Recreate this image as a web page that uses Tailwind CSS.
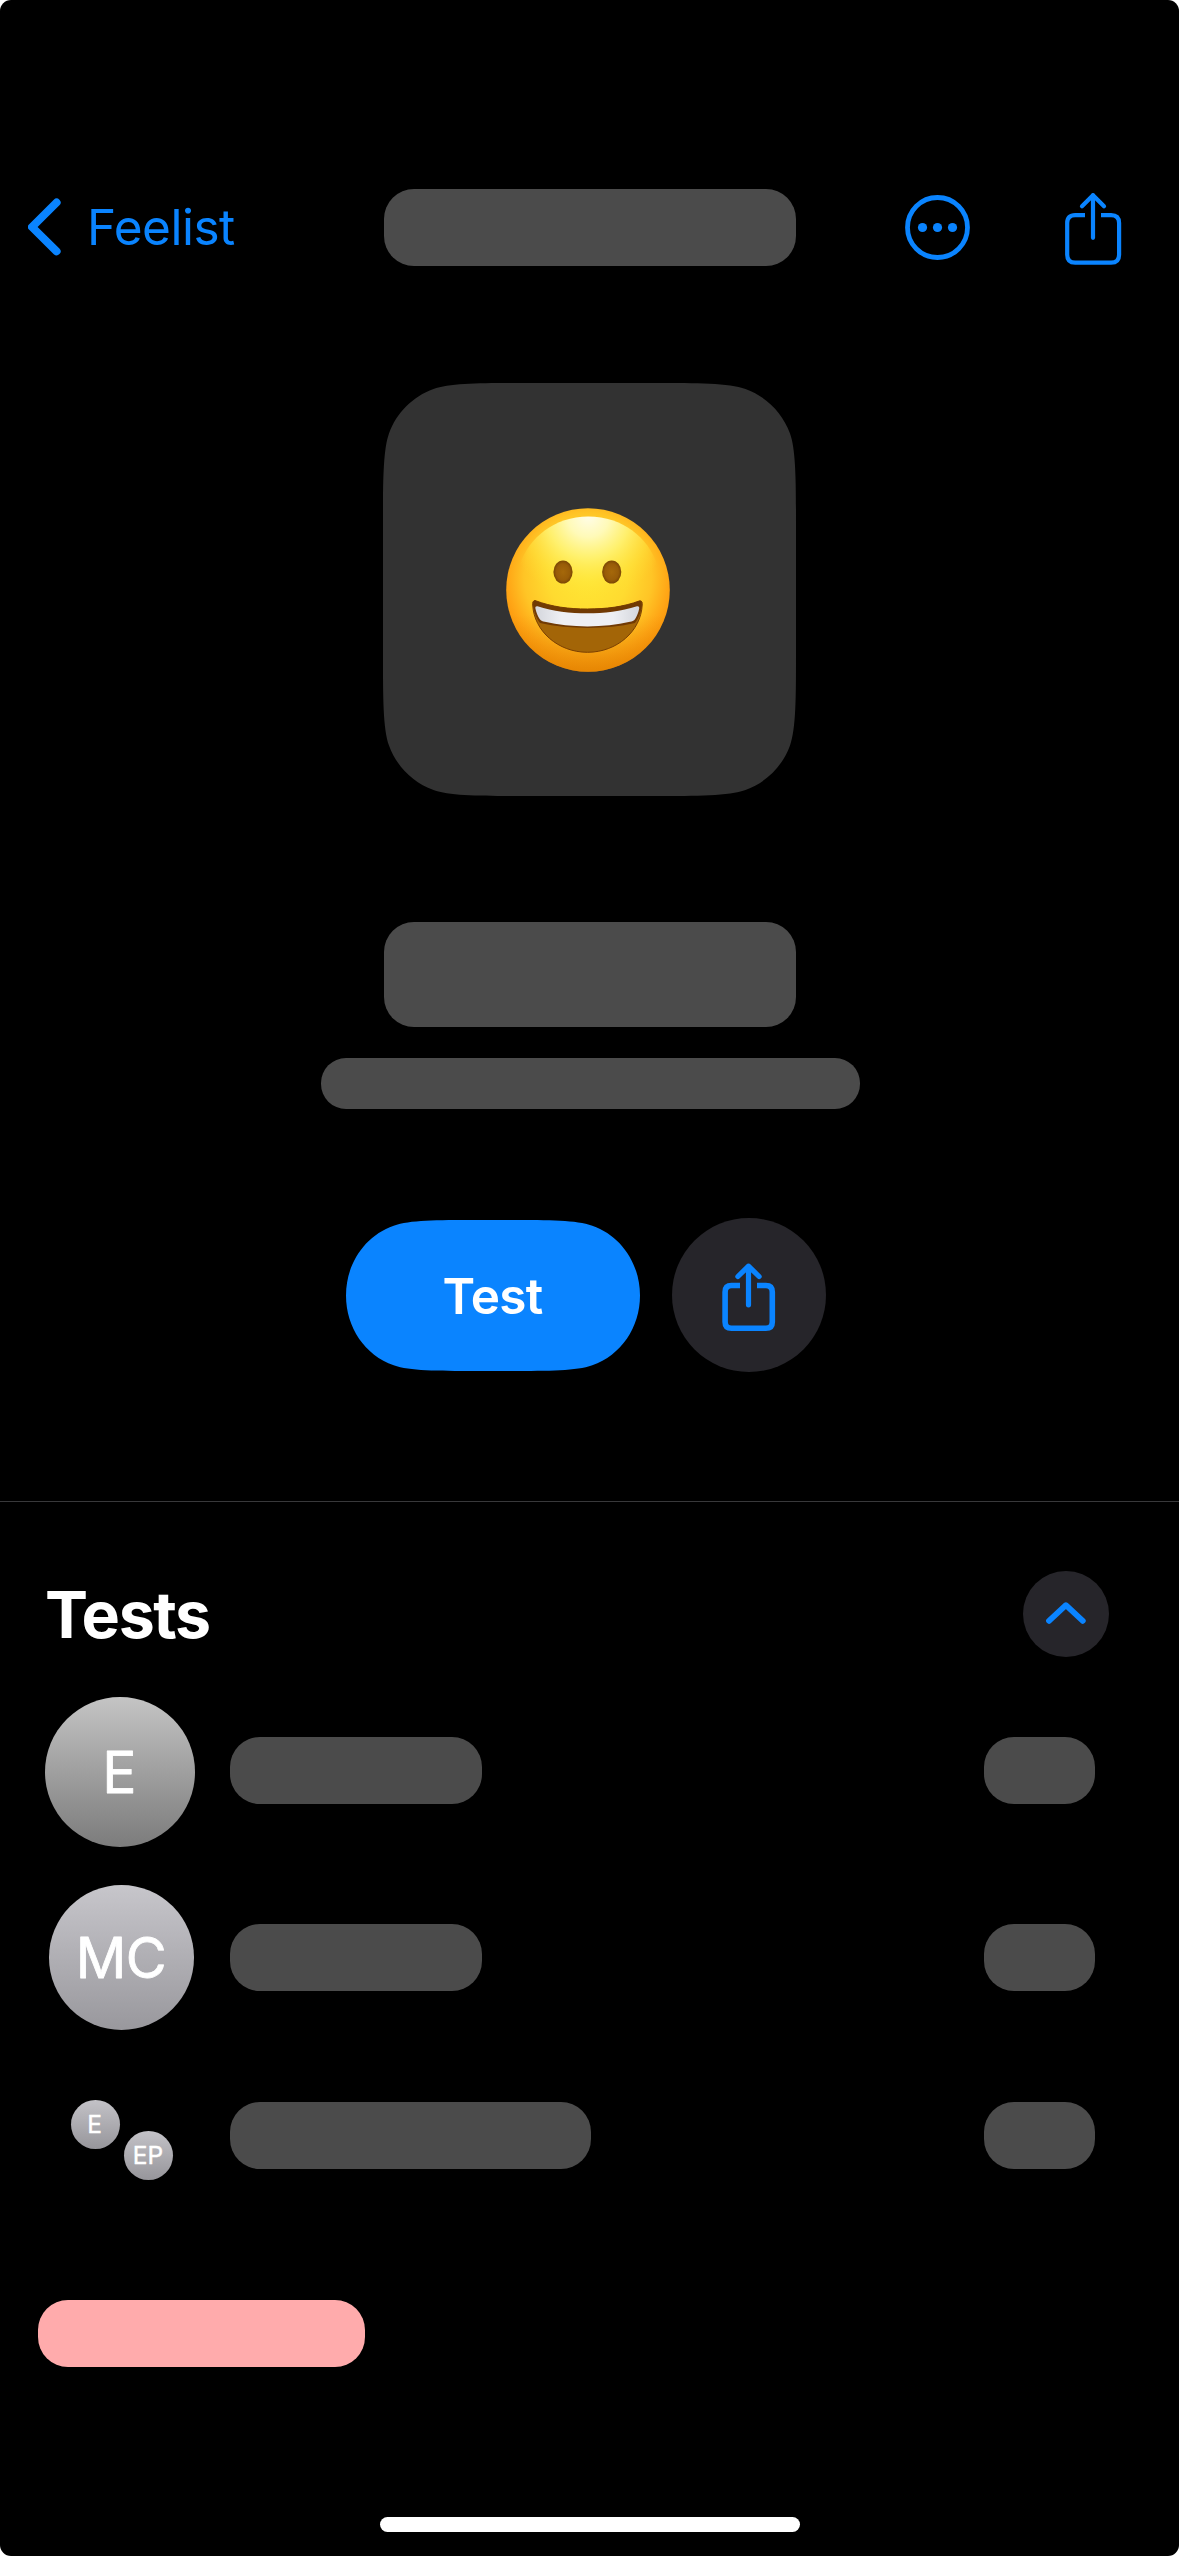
<!DOCTYPE html>
<html lang="en">
<head>
<meta charset="utf-8">
<title>Feelist</title>
<script src="https://cdn.jsdelivr.net/npm/@tailwindcss/browser@4"></script>
</head>
<body class="bg-white">
<div class="flex h-[2556px] w-[1179px] flex-col overflow-hidden rounded-[11px] bg-black font-['Inter',sans-serif]">

  <!-- Navigation bar -->
  <header class="mt-[189px] flex h-[77px] items-center">
    <a class="flex w-[384px] items-center text-[#0a84ff]">
      <svg class="mb-[2px] ml-[28px] block" width="34" height="58" viewBox="0 0 34 58" fill="none" stroke="currentColor" stroke-width="8" stroke-linecap="round" stroke-linejoin="round"><path d="M28.600 4.500 L4 29 L28.600 53.300"/></svg>
      <span class="mb-[2px] ml-[25px] text-[49.500px] leading-[60px] tracking-[-0.5px]">Feelist</span>
    </a>
    <div class="h-[77px] w-[412px] rounded-[30px] bg-[#4b4b4b]"></div>
    <svg class="ml-[108px] block text-[#0a84ff]" width="67" height="67" viewBox="0 0 67 67"><circle cx="33.5" cy="33.5" r="30" fill="none" stroke="currentColor" stroke-width="4.8"/><g fill="currentColor"><circle cx="18.5" cy="33.5" r="4.6"/><circle cx="33.5" cy="33.5" r="4.6"/><circle cx="48.5" cy="33.5" r="4.6"/></g></svg>
    <svg class="ml-[92px] block text-[#0a84ff]" width="60" height="77" viewBox="0 0 60 77" fill="none" stroke="currentColor" stroke-width="4.2"><path d="M22 26.1H12.2Q4.2 26.1 4.2 34.1V65.7Q4.2 73.7 12.2 73.7H48.1Q56.1 73.7 56.1 65.7V34.1Q56.1 26.1 48.1 26.1H38"/><path stroke-linecap="round" stroke-linejoin="round" d="M30 48.8V6.2M19 17.3L30 6.2L41 17.3"/></svg>
  </header>

  <!-- Group icon -->
  <svg class="mt-[117px] ml-[383px] block shrink-0" width="413" height="413" viewBox="0 0 413 413">
    <defs>
      <radialGradient id="skin" cx=".5" cy=".42" r=".6"><stop offset="0" stop-color="#ffe834"/><stop offset=".4" stop-color="#ffdb30"/><stop offset=".65" stop-color="#ffc526"/><stop offset=".82" stop-color="#ffa616"/><stop offset="1" stop-color="#f58a05"/></radialGradient>
      <linearGradient id="shade" x1="0" y1="0" x2="0" y2="1"><stop offset=".65" stop-color="#e58a00" stop-opacity="0"/><stop offset="1" stop-color="#dc8000" stop-opacity=".6"/></linearGradient>
      <radialGradient id="shine" gradientUnits="userSpaceOnUse" cx="108.400" cy="36" r="84"><stop offset="0" stop-color="#fffde8"/><stop offset=".25" stop-color="#fffab8"/><stop offset=".5" stop-color="#fff373" stop-opacity=".9"/><stop offset=".78" stop-color="#ffe640" stop-opacity=".5"/><stop offset="1" stop-color="#ffdc30" stop-opacity="0"/></radialGradient>
      <radialGradient id="eye"><stop offset="0" stop-color="#a5680a"/><stop offset=".7" stop-color="#985c08"/><stop offset="1" stop-color="#7a4604"/></radialGradient>
      <linearGradient id="teeth" x1="0" x2="1" y1="0" y2="0"><stop offset="0" stop-color="#d4d6dc"/><stop offset=".25" stop-color="#eeeff3"/><stop offset=".75" stop-color="#eeeff3"/><stop offset="1" stop-color="#d4d6dc"/></linearGradient>
    </defs>
    <path fill="#323232" d="M140 0H273C313 0 346 0 362.500 6C383.200 13.500 399.500 29.800 407 50.500C413 67 413 100 413 140V273C413 313 413 346 407 362.500C399.500 383.200 383.200 399.500 362.500 407C346 413 313 413 273 413H140C100 413 67 413 50.500 407C29.800 399.500 13.500 383.200 6 362.500C0 346 0 313 0 273V140C0 100 0 67 6 50.500C13.500 29.800 29.800 13.500 50.500 6C67 0 100 0 140 0Z"/>
    <g transform="translate(97 97)">
      <circle cx="108" cy="110" r="81.800" fill="url(#skin)"/>
      <circle cx="108" cy="110" r="81.800" fill="url(#shade)"/>
      <path fill="url(#shine)" d="M108.400 36.500C143 36.500 168 58 177 84C183 118 150 140 108.400 140C67 140 34 118 40 84C49 58 74 36.500 108.400 36.500Z"/>
      <ellipse cx="83" cy="92" rx="9.600" ry="11.600" fill="url(#eye)"/>
      <ellipse cx="131.700" cy="92" rx="9.600" ry="11.600" fill="url(#eye)"/>
      <path fill="#a36507" stroke="#7a3f02" stroke-width="1" d="M55 120.500C52.500 121 52.500 123 52.700 125C54 151 78 172.300 107.500 172.300C137 172.300 161 151 162.200 125C162.400 123 162.300 120.800 159.800 120.800C143 127 126 129 107.500 129C89 129 72 127 55 120.500Z"/>
      <path fill="#713a03" d="M54.600 120.400C52.800 121 53 124 53.200 126C54 133 57 139 60 143C90 149.500 126 149.500 155 143C158 139 161 133 161.800 126C162 123 162 121 159.800 120.800C143 127 126 129 107.500 129C89 129 72 127 54.600 120.400Z"/>
      <path fill="url(#teeth)" d="M57.500 126.300C56 126 55 126.800 55.400 128.600C56.200 132.500 57.600 136 59.800 139.200C61 140.700 62.800 141.300 64.800 141.800C91 148 124 148 150 141.800C152 141.300 153.900 140.700 155 139.200C157 136 158.600 132.500 159.200 128.600C159.500 126.800 158.500 126 157 126.300C141 131.500 124 133.300 107.500 133.300C90 133.300 73 131.500 57.500 126.300Z"/>
    </g>
  </svg>

  <!-- Name, member summary, actions -->
  <section class="mt-[126px] flex flex-col items-center">
    <div class="h-[105px] w-[412px] rounded-[30px] bg-[#4b4b4b]"></div>
    <div class="mt-[31px] ml-[2px] h-[51px] w-[539px] rounded-[25px] bg-[#4b4b4b]"></div>
    <div class="mt-[109px] mr-[7px] flex items-center gap-[32px]">
      <button class="grid h-[151px] w-[294px] place-items-center">
        <svg class="col-start-1 row-start-1 block" width="294" height="151" viewBox="0 0 294 151"><path fill="#0a84ff" d="M130 0H164C204 0 230 0 246.300 5.700C275 15.700 294 43.500 294 75.500C294 107.500 275 135.300 246.300 145.300C230 151 204 151 164 151H130C90 151 64 151 47.700 145.300C19 135.300 0 107.500 0 75.500C0 43.500 19 15.700 47.700 5.700C64 0 90 0 130 0Z"/></svg>
        <span class="col-start-1 row-start-1 mt-[2px] mr-[1px] text-[49.500px] leading-[60px] font-semibold tracking-[-0.7px] text-white">Test</span>
      </button>
      <button class="flex size-[154px] items-center justify-center rounded-full bg-[#26252a] text-[#0a84ff]">
        <svg class="block" width="60" height="76" viewBox="0 0 60 76" fill="none" stroke="currentColor" stroke-width="5.600"><path d="M21 28.500H12.500Q6.100 28.500 6.100 35V65Q6.100 71.300 12.500 71.300H46.900Q53.300 71.300 53.300 65V35Q53.300 28.500 46.900 28.500H38"/><path stroke-width="5.200" stroke-linecap="round" stroke-linejoin="round" d="M29.500 47.800V9.200M18.900 19.500L29.500 9.200L40.100 19.500"/></svg>
      </button>
    </div>
  </section>

  <div class="mt-[129px] h-px shrink-0 bg-[#38383a]"></div>

  <!-- Members -->
  <div class="mt-[69px] flex h-[86px] items-center justify-between pr-[70px] pl-[45px]">
    <h2 class="mt-[2px] text-[64.500px] leading-[78px] font-bold tracking-[-1.4px] text-white">Tests</h2>
    <button class="flex size-[86px] items-center justify-center rounded-full bg-[#26252a] text-[#0a84ff]">
      <svg class="mb-[2px] block" width="42" height="26" viewBox="0 0 42 26" fill="none" stroke="currentColor" stroke-width="5.800" stroke-linecap="round" stroke-linejoin="round"><path d="M4 20.800L20.900 5.200L37.800 20.800"/></svg>
    </button>
  </div>

  <ul class="mt-[40px] flex flex-col">
    <li class="flex h-[150px] items-center pr-[84px] pl-[45px]">
      <div class="size-[150px] rounded-full bg-linear-to-b from-[#c4c4c4] to-[#7c7c7c]">
        <svg class="block" width="150" height="150"><text x="74.500" y="95.500" text-anchor="middle" font-size="57" font-weight="400" fill="#fff" stroke="#fff" stroke-width=".8" stroke-linejoin="round">E</text></svg>
      </div>
      <div class="mt-[-3px] ml-[35px] h-[67px] w-[252px] rounded-[30px] bg-[#4b4b4b]"></div>
      <div class="mt-[-3px] ml-auto h-[67px] w-[111px] rounded-[30px] bg-[#4b4b4b]"></div>
    </li>
    <li class="mt-[38px] flex h-[145px] items-center pr-[84px] pl-[49px]">
      <div class="size-[145px] rounded-full bg-linear-to-b from-[#c7c6cb] to-[#99989d]">
        <svg class="block" width="145" height="145"><text x="72" y="92.500" text-anchor="middle" font-size="56" font-weight="400" letter-spacing="-.5" fill="#fff" stroke="#fff" stroke-width=".8" stroke-linejoin="round">MC</text></svg>
      </div>
      <div class="ml-[36px] h-[67px] w-[252px] rounded-[30px] bg-[#4b4b4b]"></div>
      <div class="ml-auto h-[67px] w-[111px] rounded-[30px] bg-[#4b4b4b]"></div>
    </li>
    <li class="mt-[70px] flex h-[80px] items-start pr-[84px] pl-[71px]">
      <div class="size-[49px] rounded-full bg-linear-to-b from-[#c3c2c7] to-[#97969b]">
        <svg class="block" width="49" height="49"><text x="23.500" y="33.300" text-anchor="middle" font-size="24.500" font-weight="400" fill="#fff" stroke="#fff" stroke-width=".4" stroke-linejoin="round">E</text></svg>
      </div>
      <div class="mt-[31px] ml-[4px] size-[49px] rounded-full bg-linear-to-b from-[#c3c2c7] to-[#97969b]">
        <svg class="block" width="49" height="49"><text x="24" y="33.300" text-anchor="middle" font-size="24.500" font-weight="400" fill="#fff" stroke="#fff" stroke-width=".4" stroke-linejoin="round">EP</text></svg>
      </div>
      <div class="mt-[2px] ml-[57px] h-[67px] w-[361px] rounded-[30px] bg-[#4b4b4b]"></div>
      <div class="mt-[2px] ml-auto h-[67px] w-[111px] rounded-[30px] bg-[#4b4b4b]"></div>
    </li>
  </ul>

  <div class="mt-[120px] ml-[38px] h-[67px] w-[327px] rounded-[30px] bg-[#ffabac]"></div>

  <!-- Home indicator -->
  <div class="mt-auto mb-[24px] ml-[380px] h-[15px] w-[420px] rounded-full bg-white"></div>
</div>
</body>
</html>
